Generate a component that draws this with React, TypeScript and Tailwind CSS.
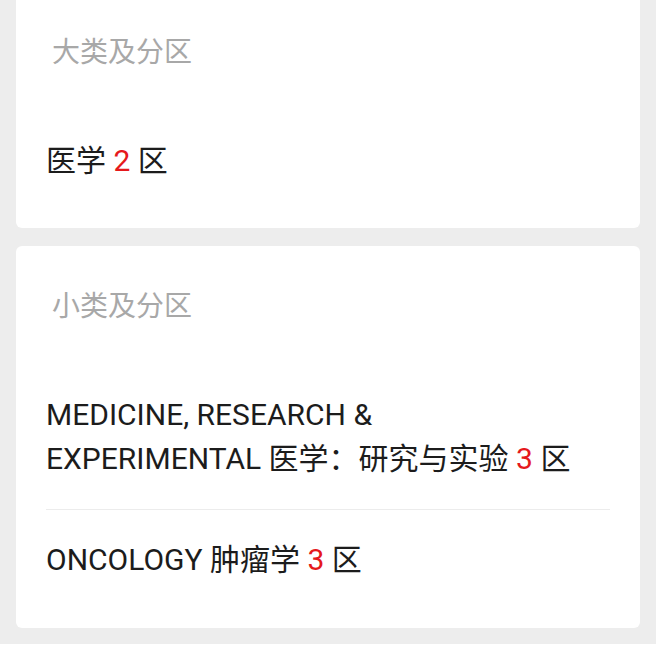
export default function App() {
  const font = { fontFamily: 'Roboto, "Noto Sans CJK SC", sans-serif' };
  return (
    <main className="min-h-[645px] bg-[#ededed] px-4 pb-4" style={font}>
      <div className="-mt-[8px] flex flex-col gap-[18px]">
        <section className="rounded-md bg-white px-[30px] pt-[43px] pb-[17px]">
          <h2 className="pl-[6px] text-[28px] leading-[36px] text-[#a8a8a8]">大类及分区</h2>
          <div className="mt-[40px] py-[28px] text-[30px] leading-[44px] text-[#1c1c1c]">
            医学 <span className="text-[#e5191c]">2</span> 区
          </div>
        </section>

        <section className="rounded-md bg-white px-[30px] pt-[43px] pb-[18px]">
          <h2 className="pl-[6px] text-[28px] leading-[36px] text-[#a8a8a8]">小类及分区</h2>
          <div className="mt-[40px] flex flex-col text-[30px] leading-[44px] text-[#1c1c1c]">
            <div className="border-b border-[#ececec] py-[28px]">
              MEDICINE, RESEARCH &amp;
              <br />
              EXPERIMENTAL 医学：研究与实验 <span className="text-[#e5191c]">3</span> 区
            </div>
            <div className="py-[28px]">
              ONCOLOGY 肿瘤学 <span className="text-[#e5191c]">3</span> 区
            </div>
          </div>
        </section>
      </div>
    </main>
  );
}
